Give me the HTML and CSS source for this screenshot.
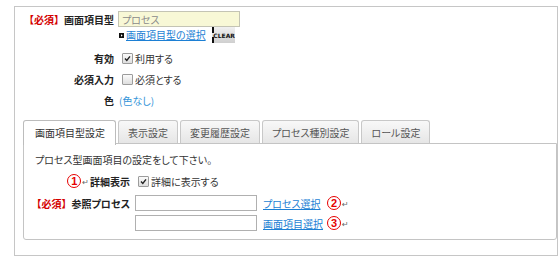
FILE: index.html
```html
<!DOCTYPE html>
<html>
  <head>
    <meta charset="utf-8">
    <title>画面項目型設定</title>
    <link rel="stylesheet" href="styles.css">
  </head>
<body>
<div class="frame">

  <!-- 基本項目 -->
  <div class="form">
    <div class="lbl"><span class="req">【必須】</span>画面項目型</div>
    <div class="val"><input type="text" class="type-input" value="プロセス" readonly></div>

    <div class="lbl"></div>
    <div class="val top">
      <span class="bullet"><svg width="5" height="5" viewBox="0 0 5 5"><rect width="5" height="5" fill="#111"/><path d="M2 1.2 L3.6 2.5 L2 3.8 Z" fill="#fff"/></svg></span>
      <a href="#" class="link">画面項目型の選択</a>
      <span class="clear">CLEAR</span>
    </div>

    <div class="lbl">有効</div>
    <div class="val"><span class="chk on"><svg width="7" height="7" viewBox="0 0 7 7"><path d="M1 3.6 L2.8 5.4 L6 1.4" fill="none" stroke="#222" stroke-width="1.4"/></svg></span>利用する</div>

    <div class="lbl">必須入力</div>
    <div class="val"><span class="chk"></span>必須とする</div>

    <div class="lbl">色</div>
    <div class="val"><span class="color">(色なし)</span></div>
  </div>

  <!-- タブ -->
  <div class="tabs">
    <div class="tab on">画面項目型設定</div>
    <div class="tab">表示設定</div>
    <div class="tab">変更履歴設定</div>
    <div class="tab">プロセス種別設定</div>
    <div class="tab">ロール設定</div>
  </div>

  <div class="panel">
    <div class="note">プロセス型画面項目の設定をして下さい。</div>
    <div class="pgrid">
      <div class="lbl"><span class="num">1</span><span class="ret">↵</span>詳細表示</div>
      <div class="val"><span class="chk on pchk"><svg width="7" height="7" viewBox="0 0 7 7"><path d="M1 3.6 L2.8 5.4 L6 1.4" fill="none" stroke="#222" stroke-width="1.4"/></svg></span>詳細に表示する</div>

      <div class="lbl"><span class="req">【必須】</span>参照プロセス</div>
      <div class="val">
        <input type="text" class="ref-input">
        <span class="pick"><a href="#" class="link">プロセス選択</a></span>
        <span class="num">2</span><span class="ret">↵</span>
      </div>

      <div class="lbl"></div>
      <div class="val">
        <input type="text" class="ref-input">
        <span class="pick"><a href="#" class="link">画面項目選択</a></span>
        <span class="num">3</span><span class="ret">↵</span>
      </div>
    </div>
  </div>

</div>
</body></html>
```

FILE: styles.css
```css
/* 全体 */
body {
  margin: 0;
  font-family: "Noto Sans CJK JP", sans-serif;
  font-size: 10px;
  color: #333;
  font-feature-settings: "palt";
}

.frame {
  margin: 6px 0 0 14px;
  width: 542px;
  height: 248px;
  border: 1px solid #c6c6c6;
}

/* 基本項目 */
.form {
  display: grid;
  grid-template-columns: 99px 1fr;
  grid-template-rows: 16px 20px 22px 21px 21px;
  column-gap: 4px;
  padding-top: 4px;
}

.lbl {
  display: flex;
  align-items: center;
  justify-content: flex-end;
  font-weight: bold;
  color: #222;
  white-space: nowrap;
}

.req {
  color: #d40000;
  font-feature-settings: normal;
}

.val {
  display: flex;
  align-items: center;
  white-space: nowrap;
}

.val.top {
  align-items: flex-start;
}

.type-input {
  width: 122px;
  height: 16px;
  box-sizing: border-box;
  border: 1px solid #c4c4b4;
  background-color: #f8f8d6;
  color: #8a8a8a;
  font: inherit;
  padding: 0 3px;
  outline: none;
}

.bullet {
  display: flex;
  margin: 6px 2px 0 1px;
}

.link {
  color: #1c7fd4;
  text-decoration: underline;
}

.val.top .link {
  line-height: 16px;
}

.clear {
  display: flex;
  align-items: center;
  justify-content: center;
  width: 23px;
  height: 16px;
  box-sizing: border-box;
  margin-left: 6px;
  border-left: 2px dashed #111;
  background: linear-gradient(#f0f0f0, #cfcfcf);
  font: bold 6px "DejaVu Sans", sans-serif;
  color: #111;
}

.chk {
  display: flex;
  align-items: center;
  justify-content: center;
  width: 9px;
  height: 9px;
  margin: 0 2px 0 4px;
  border: 1px solid #9c9c9c;
  border-radius: 1px;
  background: linear-gradient(#fbfbfb, #dedede);
}

.color {
  color: #3594d8;
  margin-left: 1px;
}

/* タブ */
.tabs {
  display: flex;
  align-items: flex-start;
  gap: 2px;
  margin-top: 9px;
  padding-left: 8px;
  height: 23px;
  position: relative;
  z-index: 1;
}

.tab {
  display: flex;
  align-items: center;
  height: 22px;
  padding: 0 9px;
  border: 1px solid #c8c8c8;
  border-bottom: none;
  border-radius: 3px 3px 0 0;
  background: linear-gradient(#f8f8f8, #e6e6e6);
  color: #555;
}

.tab.on {
  height: 23px;
  margin-bottom: -1px;
  padding: 0 10px 1px 11px;
  background: #fff;
  border-color: #bcbcbc;
  color: #333;
}

.panel {
  margin-left: 8px;
  padding: 7px 0 6px 11px;
  border: 1px solid #c4c4c4;
  border-radius: 0 0 3px 3px;
}

.note {
  height: 18px;
  line-height: 18px;
}

.pgrid {
  display: grid;
  grid-template-columns: 95px 1fr;
  grid-template-rows: 24px 20px 20px;
  column-gap: 5px;
}

.pchk {
  margin-left: 3px;
}

.ref-input {
  width: 122px;
  height: 16px;
  box-sizing: border-box;
  border: 1px solid #b0b0b0;
  background: #fff;
  outline: none;
}

.pick {
  width: 60px;
  margin: 0 4px 0 6px;
}

/* 注記の丸数字 */
.num {
  display: inline-flex;
  align-items: center;
  justify-content: center;
  width: 12px;
  height: 12px;
  border: 1.5px solid #e60000;
  border-radius: 50%;
  color: #e60000;
  font: bold 11px "Liberation Sans", sans-serif;
}

.ret {
  margin: 2px 1px 0 1px;
  font: 8px "DejaVu Sans", sans-serif;
  color: #666;
  font-weight: normal;
}
```
